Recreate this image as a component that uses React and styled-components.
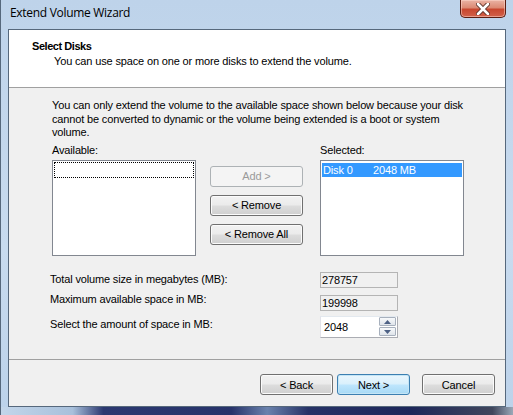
import styled, { createGlobalStyle } from 'styled-components';

const GlobalStyle = createGlobalStyle`
  html, body {
    margin: 0;
    padding: 0;
    background: #b8cde3;
  }
  body {
    font-family: "Liberation Sans", Arial, sans-serif;
    font-size: 11px;
    letter-spacing: -0.15px;
    color: #000;
  }
`;

const Window = styled.div`
  width: 513px;
  height: 415px;
  box-sizing: border-box;
  display: flex;
  flex-direction: column;
  background: linear-gradient(to bottom, #bed3ea 0%, #c8dbef 60%, #bcd2ea 100%);
  border-left: 1px solid #56687c;
  overflow: hidden;
`;

const TitleBar = styled.div`
  height: 29px;
  flex: none;
  display: flex;
  justify-content: space-between;
  align-items: flex-start;
  padding: 0 7px 0 9px;
`;

const Title = styled.span`
  font-family: "Open Sans", "Liberation Sans", sans-serif;
  font-size: 12px;
  letter-spacing: -0.3px;
  line-height: 14px;
  margin-top: 6px;
  color: #000;
`;

const CloseButton = styled.div`
  width: 46px;
  height: 18px;
  box-sizing: border-box;
  border: 1px solid #5a1d12;
  border-top: none;
  border-radius: 0 0 5px 5px;
  background: linear-gradient(to bottom, #eab3a4 0%, #dc8a74 45%, #c8472f 55%, #d2614a 100%);
  box-shadow: inset 0 0 0 1px rgba(255, 220, 210, 0.5);
  display: flex;
  align-items: center;
  justify-content: center;
`;

const Frame = styled.div`
  flex: 1;
  display: flex;
  padding: 0 7px 0 7px;
  min-height: 0;
`;

const Client = styled.div`
  flex: 1;
  display: flex;
  flex-direction: column;
  border: 1px solid #56687c;
  background: #f0f0f0;
`;

const BottomFrame = styled.div`
  height: 8px;
  flex: none;
  background: linear-gradient(
    to right,
    #c3d6ea 0%,
    #a8c0db 14%,
    #2b3870 20%,
    #27336a 45%,
    #6a82ad 52%,
    #263266 60%,
    #1d275a 80%,
    #40465c 96%,
    #9aa8b8 100%
  );
`;

const Header = styled.div`
  height: 58px;
  flex: none;
  background: #fff;
  border-bottom: 1px solid #a0a0a0;
  padding: 10px 0 0 23px;
  box-sizing: border-box;
`;

const HeaderTitle = styled.div`
  font-weight: bold;
  letter-spacing: -0.45px;
  line-height: 13px;
`;

const HeaderSub = styled.div`
  line-height: 13px;
  margin: 2px 0 0 22px;
`;

const Body = styled.div`
  flex: 1;
  padding: 11px 0 0 43px;
`;

const Paragraph = styled.p`
  margin: 0;
  line-height: 13.5px;
`;

const DiskGrid = styled.div`
  display: grid;
  grid-template-columns: 144px 124px 144px;
  grid-template-rows: 14px 96px;
  row-gap: 3px;
  margin-top: 3px;
`;

const Label = styled.div`
  line-height: 14px;
  grid-column: ${(p) => p.col};
`;

const ListBox = styled.div`
  grid-column: ${(p) => p.col};
  border: 1px solid #828790;
  background: #fff;
  padding: 1px;
`;

const ListItem = styled.div`
  height: ${(p) => (p.focused ? 16 : 14)}px;
  box-sizing: border-box;
  line-height: 14px;
  display: flex;
  background: ${(p) => (p.selected ? '#3399ff' : 'transparent')};
  color: ${(p) => (p.selected ? '#fff' : '#000')};
  border: ${(p) => (p.focused ? '1px dotted #000' : 'none')};
  margin-top: ${(p) => (p.selected ? 1 : 0)}px;
  padding-left: 1px;
`;

const ItemCol = styled.span`
  width: ${(p) => p.w}px;
`;

const ButtonCol = styled.div`
  grid-column: 2;
  display: flex;
  flex-direction: column;
  gap: 8px;
  padding: 6px 0 0 14px;
`;

const Button = styled.button`
  width: ${(p) => p.w || 73}px;
  height: 21px;
  box-sizing: border-box;
  padding: 0;
  font-family: "Liberation Sans", Arial, sans-serif;
  font-size: 11px;
  letter-spacing: -0.15px;
  color: #000;
  border: 1px solid #707070;
  border-radius: 3px;
  background: linear-gradient(to bottom, #f2f2f2 0%, #ebebeb 48%, #dddddd 52%, #cfcfcf 100%);
  box-shadow: inset 0 0 0 1px #fbfbfb;

  &:disabled {
    color: #9a9a9a;
    border-color: #adb2b5;
    background: #f4f4f4;
    box-shadow: none;
  }

  ${(p) =>
    p.primary &&
    `
    border-color: #3c7fb1;
    background: linear-gradient(to bottom, #eaf6fd 0%, #d9f0fc 48%, #bee6fd 52%, #a7d9f5 100%);
    box-shadow: inset 0 0 0 1px #c4e5f6;
  `}
`;

const FieldGrid = styled.div`
  display: grid;
  grid-template-columns: 270px 78px;
  align-items: center;
  margin: 16px 0 0 -2px;
`;

const FieldLabel = styled.div`
  line-height: 13px;
`;

const ReadOnlyBox = styled.div`
  height: 16px;
  box-sizing: border-box;
  border: 1px solid #b4b4b4;
  background: #f0f0f0;
  line-height: 14px;
  padding-left: 1px;
  margin: ${(p) => p.m};
`;

const SpinBox = styled.div`
  height: 22px;
  box-sizing: border-box;
  border: 1px solid #abadb3;
  border-top-color: #e3e9ef;
  border-left-color: #e2e3ea;
  background: #fff;
  display: flex;
  align-items: center;
  justify-content: space-between;
  padding: 0 1px 0 3px;
  margin-top: 5px;
`;

const SpinButtons = styled.div`
  display: flex;
  flex-direction: column;
  gap: 1px;
`;

const SpinButton = styled.div`
  width: 17px;
  height: 9px;
  box-sizing: border-box;
  border: 1px solid #a7b0bd;
  border-radius: 1px;
  background: linear-gradient(to bottom, #f7f9fb, #dfe4ea);
  display: flex;
  align-items: center;
  justify-content: center;
`;

const Footer = styled.div`
  height: 47px;
  flex: none;
  box-sizing: border-box;
  border-top: 1px solid #a0a0a0;
  display: flex;
  justify-content: flex-end;
  align-items: flex-start;
  padding: 14px 10px 0 0;
  gap: 4px;
`;

const Arrow = ({ up }) => (
  <svg width="7" height="4" viewBox="0 0 7 4">
    <path d={up ? 'M0 4 L3.5 0 L7 4 Z' : 'M0 0 L3.5 4 L7 0 Z'} fill="#4d6185" />
  </svg>
);

const App = () => {
  return (
    <>
      <GlobalStyle />
      <Window>
        <TitleBar>
          <Title>Extend Volume Wizard</Title>
          <CloseButton>
            <svg width="14" height="12" viewBox="0 0 14 12">
              <path
                d="M2 1 L12 11 M12 1 L2 11"
                stroke="#5a3028"
                strokeWidth="4.4"
                strokeLinecap="round"
              />
              <path
                d="M2 1 L12 11 M12 1 L2 11"
                stroke="#ffffff"
                strokeWidth="2.6"
                strokeLinecap="round"
              />
            </svg>
          </CloseButton>
        </TitleBar>
        <Frame>
          <Client>
            <Header>
              <HeaderTitle>Select Disks</HeaderTitle>
              <HeaderSub>You can use space on one or more disks to extend the volume.</HeaderSub>
            </Header>
            <Body>
              <Paragraph>
                You can only extend the volume to the available space shown below because your disk
                <br />
                cannot be converted to dynamic or the volume being extended is a boot or system
                <br />
                volume.
              </Paragraph>
              <DiskGrid>
                <Label col={1}>Available:</Label>
                <Label col={3}>Selected:</Label>
                <ListBox col={1}>
                  <ListItem focused />
                </ListBox>
                <ButtonCol>
                  <Button w={93} disabled>
                    Add &gt;
                  </Button>
                  <Button w={93}>&lt; Remove</Button>
                  <Button w={93}>&lt; Remove All</Button>
                </ButtonCol>
                <ListBox col={3}>
                  <ListItem selected>
                    <ItemCol w={50}>Disk 0</ItemCol>
                    <ItemCol w={80}>2048 MB</ItemCol>
                  </ListItem>
                </ListBox>
              </DiskGrid>
              <FieldGrid>
                <FieldLabel>Total volume size in megabytes (MB):</FieldLabel>
                <ReadOnlyBox>278757</ReadOnlyBox>
                <FieldLabel>Maximum available space in MB:</FieldLabel>
                <ReadOnlyBox m="7px 0 0 0">199998</ReadOnlyBox>
                <FieldLabel>Select the amount of space in MB:</FieldLabel>
                <SpinBox>
                  <span>2048</span>
                  <SpinButtons>
                    <SpinButton>
                      <Arrow up />
                    </SpinButton>
                    <SpinButton>
                      <Arrow />
                    </SpinButton>
                  </SpinButtons>
                </SpinBox>
              </FieldGrid>
            </Body>
            <Footer>
              <Button>&lt; Back</Button>
              <Button primary>Next &gt;</Button>
              <Button style={{ marginLeft: 8 }}>Cancel</Button>
            </Footer>
          </Client>
        </Frame>
        <BottomFrame />
      </Window>
    </>
  );
};

export default App;
